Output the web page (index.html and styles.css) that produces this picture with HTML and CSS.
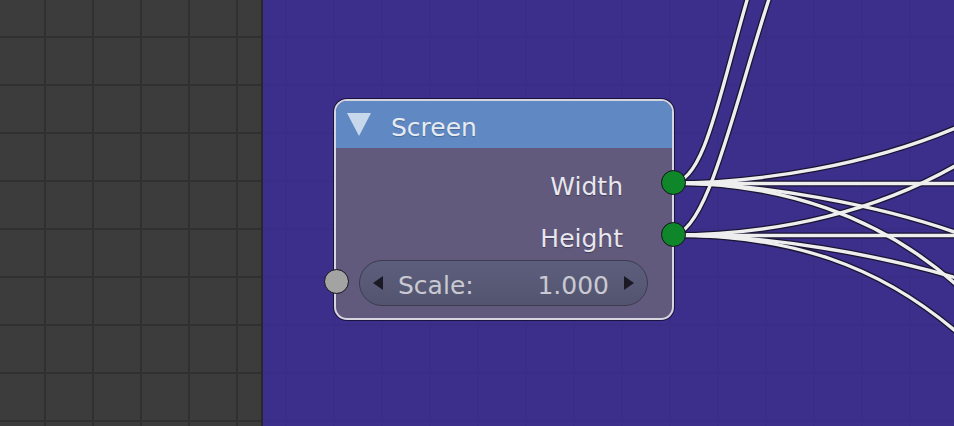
FILE: index.html
```html
<!DOCTYPE html>
<html>
<head>
<meta charset="utf-8">
<link rel="stylesheet" href="styles.css">
</head>
<body>
<div class="app">
  <aside class="sidebar"></aside>
  <main class="canvas">
    <svg class="wires" width="691" height="426" viewBox="263 0 691 426">
      <g class="wire-under">
        <path d="M672,183 C705,183 720,90 750,-10"/>
        <path d="M672,235 C708,235 735,100 772,-10"/>
        <path d="M672,183 C760,183 870,165 960,126"/>
        <path d="M672,235 C780,235 880,210 960,163"/>
        <path d="M672,183 C760,183 880,205 960,234"/>
        <path d="M672,183 C780,183 880,215 960,288"/>
        <path d="M672,235 C770,235 880,255 960,279"/>
        <path d="M672,235 C790,235 880,265 960,335"/>
        <path d="M672,183.5 L960,183.5"/>
        <path d="M672,235.5 L960,235.5"/>
      </g>
      <g class="wire-top">
        <path d="M672,183 C705,183 720,90 750,-10"/>
        <path d="M672,235 C708,235 735,100 772,-10"/>
        <path d="M672,183 C760,183 870,165 960,126"/>
        <path d="M672,235 C780,235 880,210 960,163"/>
        <path d="M672,183 C760,183 880,205 960,234"/>
        <path d="M672,183 C780,183 880,215 960,288"/>
        <path d="M672,235 C770,235 880,255 960,279"/>
        <path d="M672,235 C790,235 880,265 960,335"/>
        <path d="M672,183.5 L960,183.5"/>
        <path d="M672,235.5 L960,235.5"/>
      </g>
    </svg>
    <div class="node">
      <div class="node-header">
        <svg class="collapse" width="24" height="23" viewBox="0 0 24 23"><path d="M0,0 L24,0 L12,23 Z"/></svg>
        <span class="node-title">Screen</span>
      </div>
      <div class="node-body">
        <div class="row out">
          <span class="label">Width</span>
          <span class="socket socket-out"></span>
        </div>
        <div class="row out">
          <span class="label">Height</span>
          <span class="socket socket-out"></span>
        </div>
        <div class="field">
          <span class="socket socket-in"></span>
          <svg class="arrow" width="10" height="14" viewBox="0 0 10 14"><path d="M10,0 L10,14 L0,7 Z"/></svg>
          <span class="field-name">Scale:</span>
          <span class="field-value">1.000</span>
          <svg class="arrow" width="10" height="14" viewBox="0 0 10 14"><path d="M0,0 L0,14 L10,7 Z"/></svg>
        </div>
      </div>
    </div>
  </main>
</div>
</body>
</html>
```
FILE: styles.css
```css
* { box-sizing: border-box; }
html, body {
  margin: 0;
  padding: 0;
  width: 954px;
  height: 426px;
  overflow: hidden;
  font-family: "DejaVu Sans", "Liberation Sans", sans-serif;
}
.app {
  display: flex;
  width: 954px;
  height: 426px;
}
.sidebar {
  width: 263px;
  flex: none;
  border-right: 2px solid #282828;
  background-color: #3c3c3c;
  background-image:
    linear-gradient(90deg, #303030 2px, transparent 2px),
    linear-gradient(#303030 2px, transparent 2px);
  background-size: 48px 48px;
  background-position: 44px 36px;
}
.canvas {
  position: relative;
  flex: 1;
  background-color: #3c2f8b;
  background-image:
    linear-gradient(90deg, #3a2d85 2px, transparent 2px),
    linear-gradient(#3a2d85 2px, transparent 2px);
  background-size: 48px 48px;
  background-position: 22px 36px;
}
.wires {
  position: absolute;
  left: 0;
  top: 0;
}
.wires path {
  fill: none;
  stroke-linecap: butt;
}
.wire-under path {
  stroke: #1a1533;
  stroke-width: 6;
}
.wire-top path {
  stroke: #eeeeee;
  stroke-width: 3.4;
}
.node {
  position: absolute;
  left: 71px;
  top: 99px;
  width: 340px;
  height: 221px;
  border: 2px solid #d6d4de;
  border-radius: 13px;
  box-shadow: 0 0 0 1px rgba(20, 14, 50, 0.85);
  background: #625a7d;
  display: flex;
  flex-direction: column;
}
.node-header {
  height: 47px;
  flex: none;
  background: #6089c3;
  border-radius: 11px 11px 0 0;
  display: flex;
  align-items: center;
  padding: 6px 0 0 11px;
  gap: 20px;
}
.collapse {
  margin-top: -6px;
  flex: none;
}
.collapse path { fill: #c8d8ec; }
.node-title {
  font-size: 25px;
  color: #e6ebf3;
  text-shadow: 0 1px 1px rgba(0, 0, 0, 0.25);
}
.node-body {
  flex: 1;
  display: flex;
  flex-direction: column;
  padding: 16px 24px 0 23px;
}
.row {
  position: relative;
  height: 44px;
  display: flex;
  align-items: center;
  justify-content: flex-end;
  padding-right: 25px;
}
.row + .row { margin-top: 8px; }
.label {
  font-size: 25px;
  color: #e8e6ee;
  text-shadow: 0 1px 1px rgba(0, 0, 0, 0.35);
}
.socket {
  position: absolute;
  width: 25px;
  height: 25px;
  border-radius: 50%;
  border: 1.5px solid #15121e;
}
.socket-out {
  right: -37.5px;
  top: calc(50% - 16.5px);
  background: #10862a;
}
.socket-in {
  left: -36.5px;
  top: calc(50% - 14.5px);
  background: #a3a3a3;
}
.field {
  position: relative;
  height: 46px;
  margin-top: 0;
  border: 1.5px solid #3b3a4e;
  border-radius: 23px;
  background: linear-gradient(#5c5e7d, #53556f);
  display: flex;
  align-items: center;
  padding: 5px 13px 0 13px;
}
.arrow { flex: none; margin-top: -5px; }
.arrow path { fill: #1b1a24; }
.field-name {
  margin-left: 15px;
  font-size: 25px;
  color: #c9c9d2;
}
.field-value {
  margin-left: auto;
  margin-right: 15px;
  font-size: 25px;
  color: #c9c9d2;
}
```
